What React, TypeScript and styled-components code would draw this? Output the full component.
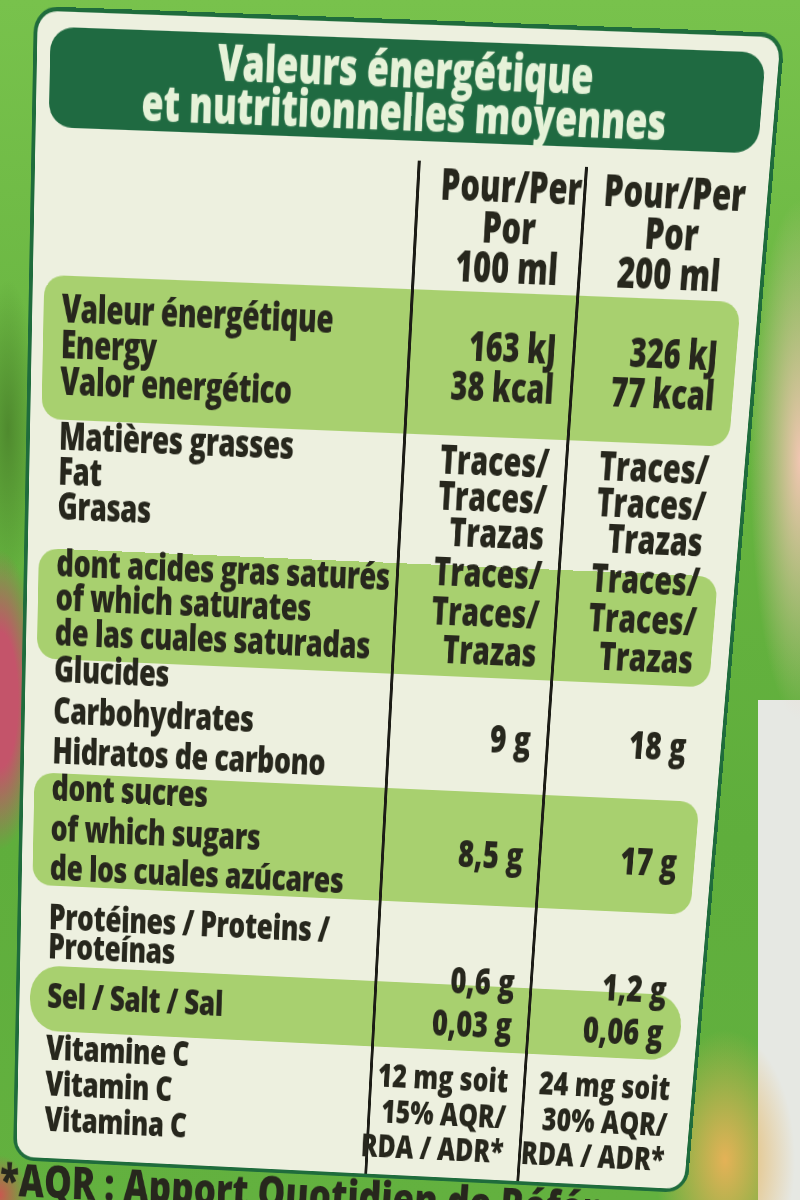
import React from "react";
import styled, { createGlobalStyle } from "styled-components";

// the label is laid out flat, then mapped onto the photographed quad
// ----------------------------------------------
type Pt = [number, number];

const FLAT_W = 960;
const FLAT_H = 1150;
const QUAD: Pt[] = [
  [34, 6],
  [785, 33],
  [687, 1193],
  [13, 1160],
];

const makeProjection = (w: number, h: number, pts: Pt[]) => {
  const [[x0, y0], [x1, y1], [x2, y2], [x3, y3]] = pts;
  const dx1 = x1 - x2;
  const dx2 = x3 - x2;
  const sx = x0 - x1 + x2 - x3;
  const dy1 = y1 - y2;
  const dy2 = y3 - y2;
  const sy = y0 - y1 + y2 - y3;
  const den = dx1 * dy2 - dx2 * dy1;
  const g = (sx * dy2 - dx2 * sy) / den;
  const k = (dx1 * sy - sx * dy1) / den;
  const a = x1 - x0 + g * x1;
  const b = x3 - x0 + k * x3;
  const d = y1 - y0 + g * y1;
  const e = y3 - y0 + k * y3;
  const matrix = `matrix3d(${a / w},${d / w},0,${g / w},${b / h},${e / h},0,${k / h},0,0,1,0,${x0},${y0},0,1)`;
  // photo point -> flat y
  const flatY = (X: number, Y: number) => {
    const A = a - g * X;
    const B = b - k * X;
    const C = d - g * Y;
    const D = e - k * Y;
    const r1 = X - x0;
    const r2 = Y - y0;
    const v = (A * r2 - C * r1) / (A * D - B * C);
    return v * h;
  };
  return { matrix, flatY };
};

const { matrix: MATRIX, flatY } = makeProjection(FLAT_W, FLAT_H, QUAD);
const LEFT = 60;
const LABEL_X = 150;
const TEXT_BIAS = 4;

// spacing of a stack of text lines measured on the photo
const stack = (top: number, x: number, ys: number[], fallback: number) => {
  const f = ys.map((y) => flatY(x, y));
  const lh = f.length > 1 ? (f[f.length - 1] - f[0]) / (f.length - 1) : fallback;
  return { lh, mt: f[0] - top - lh / 2 - TEXT_BIAS };
};

//  styled-components
// ----------------------------------------------
const GlobalStyle = createGlobalStyle`
  html, body {
    margin: 0;
    padding: 0;
    background: #62b040;
  }
`;

const Page = styled.div`
  position: relative;
  width: 800px;
  height: 1200px;
  overflow: hidden;
  font-family: "Open Sans", "DejaVu Sans", sans-serif;
  font-weight: 800;
  color: #27271d;
  background:
    radial-gradient(ellipse 40px 150px at 0px 700px, #c4546a 0%, #c4546a 45%, rgba(196, 84, 106, 0) 100%),
    radial-gradient(ellipse 30px 150px at 8px 430px, #4f8a2e 0%, rgba(79, 138, 46, 0) 100%),
    radial-gradient(ellipse 28px 40px at 0px 1195px, #c9584f 0%, rgba(201, 88, 79, 0) 100%),
    radial-gradient(ellipse 50px 260px at 800px 460px, #f1c6b2 0%, rgba(241, 198, 178, 0) 100%),
    radial-gradient(ellipse 70px 130px at 725px 1160px, #e4b257 0%, rgba(228, 178, 87, 0) 100%),
    linear-gradient(#e6e8e3, #e6e8e3) 758px 700px / 42px 500px no-repeat,
    linear-gradient(180deg, #78c24c 0%, #66b33f 40%, #5fae3c 70%, #63b13f 100%);
`;

const Carton = styled.div`
  width: ${FLAT_W}px;
  transform-origin: 0 0;
  transform: ${MATRIX};
`;

const Panel = styled.div<{ $pt: number }>`
  box-sizing: border-box;
  width: ${FLAT_W}px;
  height: ${FLAT_H}px;
  display: flex;
  flex-direction: column;
  padding: ${(p) => p.$pt}px 23px 0 15px;
  background: #edf0df;
  border: solid #1f6c3c;
  border-width: 4px 5px;
  border-radius: 30px / 24px;
`;

const Title = styled.div<{ $h: number }>`
  box-sizing: border-box;
  height: ${(p) => p.$h}px;
  margin: 0 -6px 0 2px;
  background: #1f6a41;
  border-radius: 30px / 22px;
  color: #e6f2d8;
  text-align: center;
  font-size: 46px;
  text-shadow: 0 0 2px rgba(230, 245, 220, 0.45);
`;

const Table = styled.div<{ $gap: number }>`
  display: flex;
  flex-direction: column;
  margin-top: ${(p) => p.$gap}px;
`;

const Row = styled.div<{ $band?: boolean; $pill?: boolean; $h: number }>`
  display: grid;
  grid-template-columns: 482px 216px 1fr;
  height: ${(p) => p.$h}px;
  background: ${(p) => (p.$band ? "#a8d06f" : "transparent")};
  border-radius: ${(p) => (p.$pill ? "40px / 33px" : "26px / 20px")};
`;

// a stack of text lines, placed at its measured height inside a cell
const Lines = styled.div<{ $mt: number; $lh: number; $align?: string }>`
  display: flex;
  flex-direction: column;
  align-items: ${(p) => p.$align ?? "flex-start"};
  margin-top: ${(p) => p.$mt}px;
  line-height: ${(p) => p.$lh}px;
  white-space: nowrap;
`;

const Label = styled.div`
  padding-left: 24px;
  font-size: 37px;
  letter-spacing: -0.6px;
`;

const Value = styled.div<{ $pr: number; $small?: boolean }>`
  position: relative;
  z-index: 1;
  padding-right: ${(p) => p.$pr}px;
  border-left: 4px solid #1c1c16;
  font-size: ${(p) => (p.$small ? 35 : 38)}px;
`;

const Head = styled.div<{ $pl: number }>`
  padding-left: ${(p) => p.$pl}px;
  border-left: 4px solid #1c1c16;
  font-size: 40px;
`;

const Footnote = styled.div`
  margin: -4px 0 0 -18px;
  font-size: 50px;
  line-height: 50px;
  white-space: nowrap;
`;

// rows, measured on the photo (y of bottom edge, line centres)
// ----------------------------------------------
type Spec = {
  bottom: number | null;
  band?: boolean;
  pill?: boolean;
  small?: boolean;
  label: string[];
  labelY: number[];
  valueX: number;
  valueY: number[];
  per100: string[];
  per200: string[];
};

const traces = ["Traces/", "Traces/", "Trazas"];

const SPECS: Spec[] = [
  {
    bottom: 420,
    band: true,
    label: ["Valeur énergétique", "Energy", "Valor energético"],
    labelY: [315, 350, 388],
    valueX: 510,
    valueY: [352, 392],
    per100: ["163 kJ", "38 kcal"],
    per200: ["326 kJ", "77 kcal"],
  },
  {
    bottom: 549,
    label: ["Matières grasses", "Fat", "Grasas"],
    labelY: [443, 478, 513],
    valueX: 500,
    valueY: [465, 503, 537],
    per100: traces,
    per200: traces,
  },
  {
    bottom: 659,
    band: true,
    label: ["dont acides gras saturés", "of which saturates", "de las cuales saturadas"],
    labelY: [570, 605, 640],
    valueX: 500,
    valueY: [577, 616, 655],
    per100: traces,
    per200: traces,
  },
  {
    bottom: 773,
    label: ["Glucides", "Carbohydrates", "Hidratos de carbono"],
    labelY: [676, 716, 758],
    valueX: 510,
    valueY: [742],
    per100: ["9 g"],
    per200: ["18 g"],
  },
  {
    bottom: 886,
    band: true,
    label: ["dont sucres", "of which sugars", "de los cuales azúcares"],
    labelY: [795, 835, 875],
    valueX: 500,
    valueY: [858],
    per100: ["8,5 g"],
    per200: ["17 g"],
  },
  {
    bottom: 966,
    label: ["Protéines / Proteins /", "Proteínas"],
    labelY: [924, 954],
    valueX: 490,
    valueY: [985],
    per100: ["0,6 g"],
    per200: ["1,2 g"],
  },
  {
    bottom: 1032,
    band: true,
    pill: true,
    label: ["Sel / Salt / Sal"],
    labelY: [1003],
    valueX: 490,
    valueY: [1028],
    per100: ["0,03 g"],
    per200: ["0,06 g"],
  },
  {
    bottom: null,
    small: true,
    label: ["Vitamine C", "Vitamin C", "Vitamina C"],
    labelY: [1056, 1091, 1127],
    valueX: 450,
    valueY: [1082, 1118, 1153],
    per100: ["12 mg soit", "15% AQR/", "RDA / ADR*"],
    per200: ["24 mg soit", "30% AQR/", "RDA / ADR*"],
  },
];

const titleTop = flatY(LEFT, 27);
const titleBottom = flatY(LEFT, 128);
const TITLE = {
  top: titleTop - 4,
  h: titleBottom - titleTop,
  text: stack(titleTop, 404, [72, 115], 43),
};

const headTop = flatY(LEFT, 147);
const headBottom = flatY(LEFT, 276);
const HEAD = {
  gap: headTop - titleBottom,
  h: headBottom - headTop,
  text: stack(headTop, 510, [190, 232, 272], 40),
};

type Placed = Spec & {
  h: number;
  lab: { lh: number; mt: number };
  val: { lh: number; mt: number };
};

const ROWS = SPECS.reduce<{ top: number; list: Placed[] }>(
  (acc, s) => {
    const bottom = s.bottom === null ? FLAT_H - 4 : flatY(LEFT, s.bottom);
    acc.list.push({
      ...s,
      h: bottom - acc.top,
      lab: stack(acc.top, LABEL_X, s.labelY, 36),
      val: stack(acc.top, s.valueX, s.valueY, 38),
    });
    acc.top = bottom;
    return acc;
  },
  { top: headBottom, list: [] }
).list;

// ----------------------------------------------
const NutritionLabel = () => {
  return (
    <Panel $pt={TITLE.top}>
      <Title $h={TITLE.h}>
        <Lines $mt={TITLE.text.mt} $lh={TITLE.text.lh} $align="center">
          <span>Valeurs énergétique</span>
          <span>et nutritionnelles moyennes</span>
        </Lines>
      </Title>
      <Table $gap={HEAD.gap}>
        <Row $h={HEAD.h}>
          <div />
          <Head $pl={26}>
            <Lines $mt={HEAD.text.mt} $lh={HEAD.text.lh} $align="center">
              <span>Pour/Per</span>
              <span>Por</span>
              <span>100 ml</span>
            </Lines>
          </Head>
          <Head $pl={18}>
            <Lines $mt={HEAD.text.mt} $lh={HEAD.text.lh} $align="center">
              <span>Pour/Per</span>
              <span>Por</span>
              <span>200 ml</span>
            </Lines>
          </Head>
        </Row>
        {ROWS.map((row) => (
          <Row key={row.label[0]} $h={row.h} $band={row.band} $pill={row.pill}>
            <Label>
              <Lines $mt={row.lab.mt} $lh={row.lab.lh}>
                {row.label.map((t) => (
                  <span key={t}>{t}</span>
                ))}
              </Lines>
            </Label>
            <Value $pr={21} $small={row.small}>
              <Lines $mt={row.val.mt} $lh={row.val.lh} $align="flex-end">
                {row.per100.map((t, i) => (
                  <span key={i}>{t}</span>
                ))}
              </Lines>
            </Value>
            <Value $pr={24} $small={row.small}>
              <Lines $mt={row.val.mt} $lh={row.val.lh} $align="flex-end">
                {row.per200.map((t, i) => (
                  <span key={i}>{t}</span>
                ))}
              </Lines>
            </Value>
          </Row>
        ))}
      </Table>
    </Panel>
  );
};

const App = () => {
  return (
    <>
      <GlobalStyle />
      <Page>
        <Carton>
          <NutritionLabel />
          <Footnote>*AQR : Apport Quotidien de Référence</Footnote>
        </Carton>
      </Page>
    </>
  );
};

export default App;
